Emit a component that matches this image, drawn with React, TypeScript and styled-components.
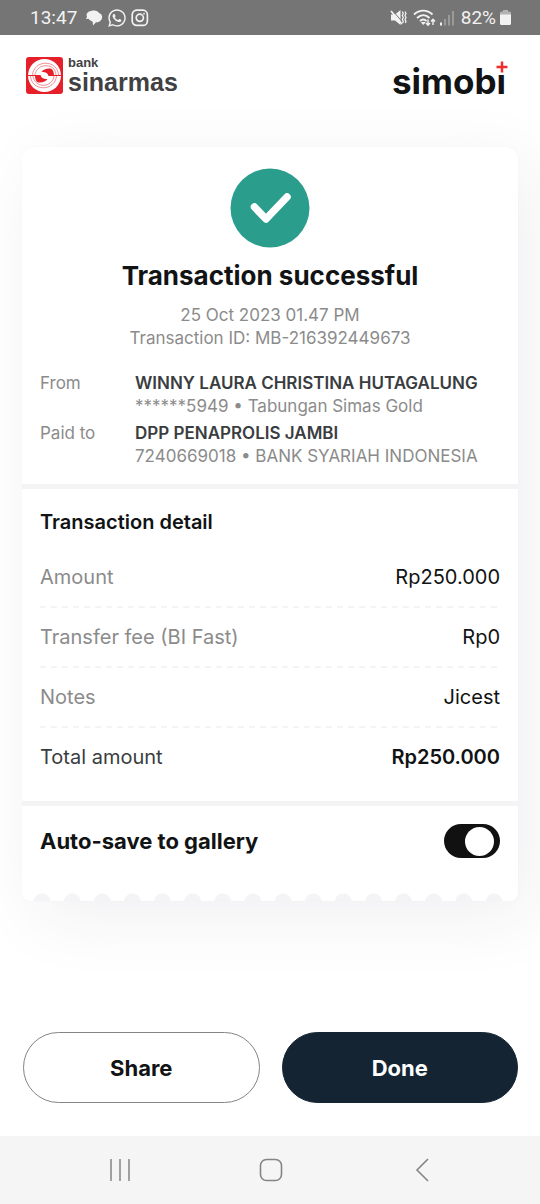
import React, { useState } from "react";
import styled, { createGlobalStyle } from "styled-components";
import { FaWhatsapp } from "react-icons/fa";

const GlobalStyle = createGlobalStyle`
  *, *::before, *::after { box-sizing: border-box; }
  body {
    margin: 0;
    background: #fff;
    font-family: Inter, "Liberation Sans", sans-serif;
    color: #111314;
  }
`;

const Page = styled.div`
  display: flex;
  flex-direction: column;
  min-height: 100vh;
  overflow: hidden;
`;

const StatusBar = styled.div`
  display: flex;
  align-items: center;
  justify-content: space-between;
  height: 35px;
  padding: 0 29px 0 30px;
  background: #757575;
  color: #f2f2f2;
  font: 400 19px/24px Roboto, "Liberation Sans", sans-serif;
`;

const StatusGroup = styled.div<{ $gap: number }>`
  display: flex;
  align-items: center;
  gap: ${(p) => p.$gap}px;
`;

const StatusText = styled.span``;

const Header = styled.header`
  display: flex;
  align-items: flex-start;
  justify-content: space-between;
  height: 112px;
  padding: 20px 34px 0 25px;
`;

const BankLogo = styled.div`
  display: flex;
  gap: 5px;
  padding-top: 1px;
`;

const BankName = styled.div`
  display: flex;
  flex-direction: column;
  color: #414042;
  font-family: "Liberation Sans", sans-serif;
  font-weight: 700;
`;

const BankSmall = styled.span`
  font-size: 13px;
  line-height: 14px;
`;

const BankLarge = styled.span`
  font-size: 25px;
  line-height: 24px;
`;

const AppLogo = styled.div`
  position: relative;
  padding-top: 6px;
  font-size: 35px;
  line-height: 40px;
  font-weight: 700;
`;

const PlusMark = styled.svg`
  position: absolute;
  top: 6px;
  right: -2px;
`;

const Main = styled.main`
  flex: 1;
  padding: 0 22px;
`;

const Card = styled.article`
  border-radius: 12px 12px 8px 8px;
  background: #fff;
  box-shadow: 0 0 2px rgba(0, 0, 0, 0.04), 14px 16px 70px rgba(40, 40, 70, 0.07);
`;

const Section = styled.section<{ $pad: string }>`
  padding: ${(p) => p.$pad};
  & + & {
    border-top: 5px solid #f4f4f5;
  }
`;

const Summary = styled.div`
  display: flex;
  flex-direction: column;
  align-items: center;
  text-align: center;
`;

const Title = styled.h1`
  margin: 12px 0;
  font-size: 26px;
  line-height: 32px;
  font-weight: 650;
`;

const Muted = styled.span`
  color: #8b8b8b;
  font-size: 17px;
  line-height: 23px;
`;

const Parties = styled.dl`
  display: grid;
  grid-template-columns: 95px 1fr;
  row-gap: 4px;
  margin: 22px 0 0;
  font-size: 17px;
  line-height: 23px;
  color: #8b8b8b;
`;

const PartyLabel = styled.dt``;

const Party = styled.dd`
  display: flex;
  flex-direction: column;
  margin: 0;
  white-space: nowrap;
`;

const PartyName = styled.strong`
  color: #3a3d40;
  font-weight: 600;
`;

const SectionTitle = styled.h2`
  margin: 0 0 14px;
  font-size: 20px;
  line-height: 24px;
  font-weight: 600;
`;

const Rows = styled.dl`
  margin: 0;
  font-size: 20px;
  line-height: 24px;
`;

const Row = styled.div<{ $total?: boolean }>`
  display: flex;
  justify-content: space-between;
  padding: 17px 0;
  color: ${(p) => (p.$total ? "#3a3d40" : "#8b8b8b")};
  &:not(:last-child) {
    padding-bottom: 19px;
    background: repeating-linear-gradient(90deg, #f4f4f5 0 6px, transparent 6px 11px)
      left bottom / 100% 2px no-repeat;
  }
`;

const RowLabel = styled.dt``;

const RowValue = styled.dd<{ $total?: boolean }>`
  margin: 0;
  color: #111314;
  font-weight: ${(p) => (p.$total ? 600 : 400)};
`;

const ToggleRow = styled.label`
  display: flex;
  align-items: center;
  justify-content: space-between;
  font-size: 22px;
  line-height: 34px;
  font-weight: 650;
`;

const Switch = styled.input`
  appearance: none;
  display: flex;
  align-items: center;
  width: 56px;
  height: 34px;
  margin: 0;
  padding: 0 6px;
  border-radius: 17px;
  background: ${(p) => (p.checked ? "#111" : "#bbb")};
  justify-content: ${(p) => (p.checked ? "flex-end" : "flex-start")};
  &::before {
    content: "";
    width: 29px;
    height: 29px;
    border-radius: 50%;
    background: #fff;
  }
`;

const Scallops = styled.div`
  height: 8px;
  margin: 0 9px 0 5px;
  background: radial-gradient(circle at 50% 9px, #f4f4f6 8px, transparent 9px)
    left top / 30px 8px;
  background-repeat: round no-repeat;
`;

const Actions = styled.div`
  display: grid;
  grid-template-columns: 1fr 1fr;
  gap: 22px;
  padding: 0 22px 33px 23px;
`;

const Action = styled.button<{ $primary?: boolean }>`
  height: 71px;
  border: 1px solid ${(p) => (p.$primary ? "#142433" : "#858585")};
  border-radius: 36px;
  background: ${(p) => (p.$primary ? "#142433" : "#fff")};
  color: ${(p) => (p.$primary ? "#fff" : "#111314")};
  font: 700 22px/28px Inter, "Liberation Sans", sans-serif;
`;

const NavBar = styled.nav`
  display: grid;
  grid-template-columns: 1fr 1fr 1fr;
  height: 68px;
  padding: 0 43px 0 45px;
  background: #f5f5f5;
`;

const NavButton = styled.button`
  display: flex;
  align-items: center;
  justify-content: center;
  border: 0;
  padding: 0;
  background: none;
  color: #858585;
`;

const details = [
  { label: "Amount", value: "Rp250.000" },
  { label: "Transfer fee (BI Fast)", value: "Rp0" },
  { label: "Notes", value: "Jicest" },
  { label: "Total amount", value: "Rp250.000", total: true },
];

const SinarmasMark = () => (
  <svg width="38" height="38" viewBox="0 0 38 38" aria-hidden="true">
    <rect x="1" y="1" width="37" height="37" rx="3" fill="#e5202b" />
    <circle cx="19.5" cy="19.5" r="16.5" fill="#fff" />
    <g fill="#e5202b">
      <path d="M2 18.900H12V20.100H2ZM27 18.900H37V20.100H27Z" />
      <path d="M29 20C29 15 27.500 12.500 24.500 12.500C20.500 12.500 18 14 16.500 16C20 15.500 23 17 23.500 20Z" />
      <path d="M10 19C10 24 11.500 26.500 14.500 26.500C18.500 26.500 21 25 22.500 23C19 23.500 16 22 15.500 19Z" />
    </g>
    <g fill="none" stroke="#e5202b" strokeWidth=".5">
      <path d="M10 19C10.500 14 15 9.500 21 9.700C26 9.800 30.500 12 31 19" />
      <path d="M7.500 19C8 12 14 7 21 7.200C28 7.500 33 12 33.500 19" />
      <path d="M8 20C8.500 25 13 29.300 18 29.300C24 29.500 28.500 25 29 20" />
      <path d="M5.500 20C6 27 11 31.500 18 31.800C25 32 31 27 31.500 20" />
    </g>
  </svg>
);

const ChatIcon = () => (
  <svg width="18" height="18" viewBox="0 0 18 18" fill="currentColor" aria-hidden="true">
    <path d="M6 2C10 .8 13 2 14 4C17 5 18 8 16.500 10.500C15.500 12.500 13 13.300 11 13.300L8 16.500L7.600 12.500C5.500 12 4.300 11 3.500 9.800L1 10L2 7.500C.8 5 2.500 2.800 6 2Z" />
  </svg>
);

const InstagramIcon = () => (
  <svg width="18" height="18" viewBox="0 0 18 18" fill="none" stroke="currentColor" strokeWidth="1.700" aria-hidden="true">
    <rect x="1.200" y="1.200" width="15.200" height="15.200" rx="4.500" />
    <circle cx="8.800" cy="8.800" r="3.600" />
    <circle cx="13" cy="4.700" r=".9" fill="currentColor" stroke="none" />
  </svg>
);

const MuteIcon = () => (
  <svg width="17" height="17" viewBox="0 0 17 17" aria-hidden="true">
    <path d="M1 5.500H5L10.500 1V16L5 11.500H1Z" fill="currentColor" />
    <path d="M2.500 1.500L12 12.500" stroke="#757575" strokeWidth="1" />
    <path d="M1 2L12 15" stroke="currentColor" strokeWidth="1.700" />
    <path d="M12.300 2.500L13.300 4.500L12.300 6.500L13.300 8.500L12.300 10.500L13.300 12.500L12.600 14M15 2.500L16 4.500L15 6.500L16 8.500L15 10.500L16 12.500L15.300 14" stroke="currentColor" strokeWidth="1.300" fill="none" />
  </svg>
);

const WifiIcon = () => (
  <svg width="24" height="18" viewBox="0 0 24 18" fill="none" stroke="currentColor" aria-hidden="true">
    <path d="M1 5.500C6.500 .3 14 .3 19.500 5.500M4 9C8 5.200 12.800 5.200 16.500 9M7 12.200C9 10 11.500 10 13.500 12.200" strokeWidth="1.900" />
    <path d="M8.500 13.500L10.200 15.500L12 13.500Z" fill="currentColor" />
    <path d="M15 10.500V16M13 14L15 16.300L17 14M20 16V10.500M18 12.500L20 10.200L22 12.500" strokeWidth="1.400" />
  </svg>
);

const SignalIcon = () => (
  <svg width="15" height="16" viewBox="0 0 15 16" fill="currentColor" aria-hidden="true">
    <rect x="0" y="12.500" width="2" height="3" />
    <rect x="4" y="9" width="2" height="6.500" opacity=".3" />
    <rect x="8" y="5" width="2" height="10.500" opacity=".3" />
    <rect x="12" y="1" width="2" height="14.500" opacity=".3" />
  </svg>
);

const BatteryIcon = () => (
  <svg width="11" height="17" viewBox="0 0 11 17" fill="currentColor" aria-hidden="true">
    <path d="M3 1H8V2.500H9.500Q11 2.500 11 4V6H0V4Q0 2.500 1.500 2.500H3Z" opacity=".5" />
    <path d="M0 5.500H11V14.500Q11 16 9.500 16H1.500Q0 16 0 14.500Z" />
  </svg>
);

const CheckBadge = () => (
  <svg width="80" height="80" viewBox="0 0 80 80" aria-hidden="true">
    <circle cx="40" cy="40" r="39.500" fill="#2b9d8d" />
    <path d="M24.500 39L36 51L57 29" fill="none" stroke="#fff" strokeWidth="7.500" strokeLinecap="round" strokeLinejoin="round" />
  </svg>
);

export default function App() {
  const [autoSave, setAutoSave] = useState(true);
  return (
    <Page>
      <GlobalStyle />
      <StatusBar>
        <StatusGroup $gap={8}>
          <StatusText>13:47</StatusText>
          <StatusGroup $gap={4}>
            <ChatIcon />
            <FaWhatsapp size={20} />
            <InstagramIcon />
          </StatusGroup>
        </StatusGroup>
        <StatusGroup $gap={6}>
          <MuteIcon />
          <StatusGroup $gap={3}>
            <WifiIcon />
            <SignalIcon />
          </StatusGroup>
          <StatusGroup $gap={4}>
            <StatusText>82%</StatusText>
            <BatteryIcon />
          </StatusGroup>
        </StatusGroup>
      </StatusBar>

      <Header>
        <BankLogo>
          <SinarmasMark />
          <BankName>
            <BankSmall>bank</BankSmall>
            <BankLarge>sinarmas</BankLarge>
          </BankName>
        </BankLogo>
        <AppLogo>
          simobı
          <PlusMark width="12" height="12" viewBox="0 0 12 12" aria-hidden="true">
            <path d="M6 .5V11.500M.5 6H11.500" stroke="#ee2e2e" strokeWidth="2.500" />
          </PlusMark>
        </AppLogo>
      </Header>

      <Main>
        <Card>
          <Section $pad="21px 18px 16px">
            <Summary>
              <CheckBadge />
              <Title>Transaction successful</Title>
              <Muted>25 Oct 2023 01.47 PM</Muted>
              <Muted>Transaction ID: MB-216392449673</Muted>
            </Summary>
            <Parties>
              <PartyLabel>From</PartyLabel>
              <Party>
                <PartyName>WINNY LAURA CHRISTINA HUTAGALUNG</PartyName>
                <Muted>******5949 • Tabungan Simas Gold</Muted>
              </Party>
              <PartyLabel>Paid to</PartyLabel>
              <Party>
                <PartyName>DPP PENAPROLIS JAMBI</PartyName>
                <Muted>7240669018 • BANK SYARIAH INDONESIA</Muted>
              </Party>
            </Parties>
          </Section>
          <Section $pad="21px 18px 15px">
            <SectionTitle>Transaction detail</SectionTitle>
            <Rows>
              {details.map((d) => (
                <Row key={d.label} $total={d.total}>
                  <RowLabel>{d.label}</RowLabel>
                  <RowValue $total={d.total}>{d.value}</RowValue>
                </Row>
              ))}
            </Rows>
          </Section>
          <Section $pad="18px 18px 35px">
            <ToggleRow>
              Auto-save to gallery
              <Switch
                type="checkbox"
                role="switch"
                checked={autoSave}
                onChange={(e) => setAutoSave(e.target.checked)}
              />
            </ToggleRow>
          </Section>
          <Scallops />
        </Card>
      </Main>

      <Actions>
        <Action type="button">Share</Action>
        <Action type="button" $primary>
          Done
        </Action>
      </Actions>

      <NavBar aria-label="System">
        <NavButton type="button" aria-label="Recent apps">
          <svg width="22" height="22" viewBox="0 0 22 22" stroke="currentColor" strokeWidth="1.500">
            <path d="M2 0V22M11 0V22M20 0V22" />
          </svg>
        </NavButton>
        <NavButton type="button" aria-label="Home">
          <svg width="24" height="24" viewBox="0 0 24 24" fill="none" stroke="currentColor" strokeWidth="1.600">
            <rect x="1.500" y="1.500" width="21" height="21" rx="6" />
          </svg>
        </NavButton>
        <NavButton type="button" aria-label="Back">
          <svg width="14" height="24" viewBox="0 0 14 24" fill="none" stroke="currentColor" strokeWidth="1.600">
            <path d="M13 1L2 12L13 23" />
          </svg>
        </NavButton>
      </NavBar>
    </Page>
  );
}
